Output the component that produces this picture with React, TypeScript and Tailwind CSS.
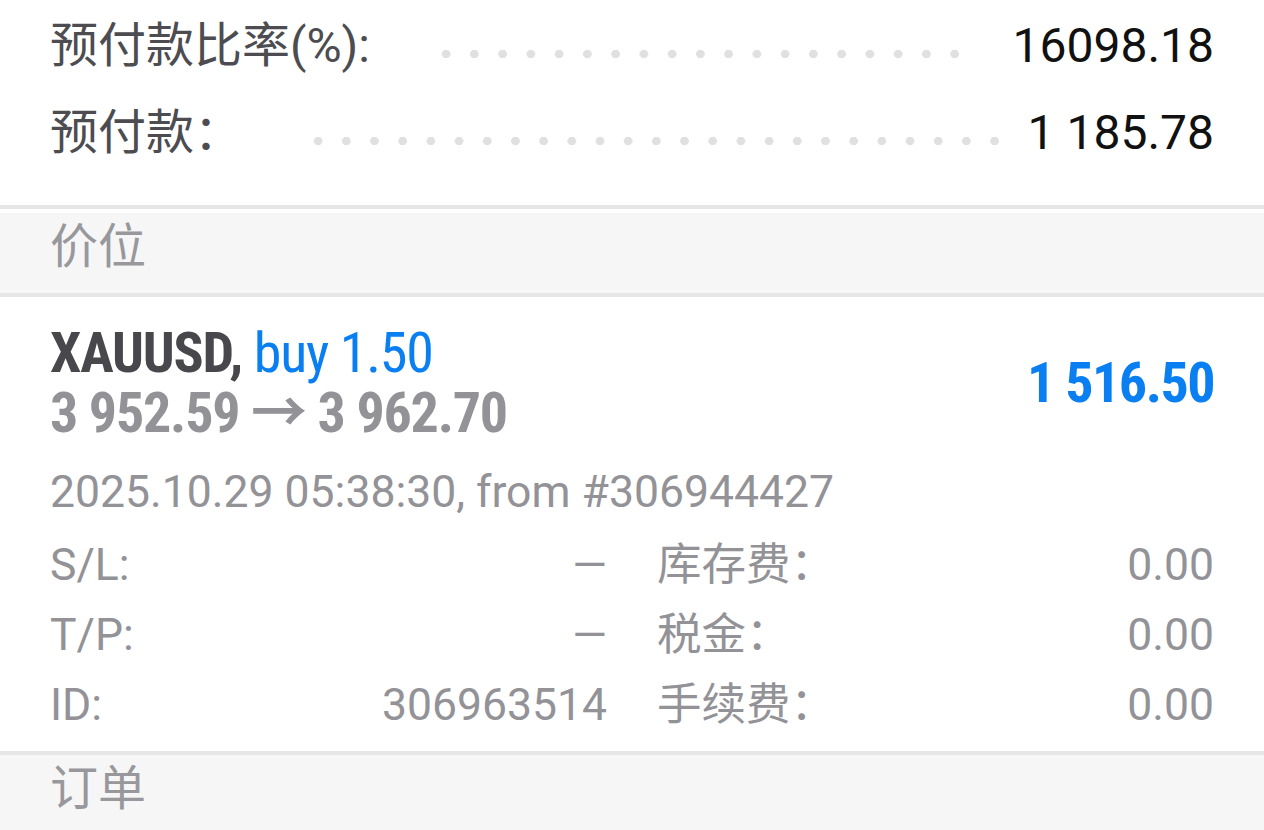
import React from 'react';

const font = "font-['Roboto','Noto_Sans_CJK_SC',sans-serif]";

interface Summary {
  label: string;
  value: string;
  dotsClass: string;
}

const summary: Summary[] = [
  { label: '预付款比率(%):', value: '16098.18', dotsClass: 'ml-[62px] mr-[44px]' },
  { label: '预付款：', value: '1 185.78', dotsClass: 'ml-[62px] mr-[19px]' },
];

const details = [
  { label: 'S/L:', value: '—', label2: '库存费：', value2: '0.00' },
  { label: 'T/P:', value: '—', label2: '税金：', value2: '0.00' },
  { label: 'ID:', value: '306963514', label2: '手续费：', value2: '0.00' },
];

function SectionHeader({ title, gap }: { title: string; gap?: boolean }) {
  return (
    <div className="border-t-4 border-[#e6e6e6]">
      {gap && <div className="h-1 bg-white" />}
      <div className="h-[80px] bg-[#f6f6f6] px-[50px] text-[48px] leading-[68px] text-[#98989c]">{title}</div>
    </div>
  );
}

export default function App() {
  return (
    <div className={`${font} w-[1264px] h-[830px] overflow-hidden bg-white`}>
      <div className="pt-[2px] px-[50px] mb-[29px]">
        {summary.map((row) => (
          <div key={row.label} className="flex h-[87px] items-center text-[48px]">
            <span className="text-[#4c4c51]">{row.label}</span>
            <div
              className={`${row.dotsClass} mt-4 h-2 flex-1 bg-[radial-gradient(circle,#e0e0e0_4px,transparent_4.5px)] bg-[length:28px_8px] bg-repeat-round`}
            />
            <span className="text-[#111111]">{row.value}</span>
          </div>
        ))}
      </div>

      <SectionHeader title="价位" gap />

      <div className="border-t-4 border-[#e6e6e6] px-[50px] pt-[26px]">
        <div className="flex items-center justify-between">
          <div className="text-[56px] leading-[60px] font-stretch-condensed tracking-[-1.2px]">
            <div>
              <span className="font-bold text-[#47474c]">XAUUSD,</span>
              <span className="text-[#0a7ff2]"> buy 1.50</span>
            </div>
            <div className="font-bold text-[#929297]">3 952.59 → 3 962.70</div>
          </div>
          <div className="text-[56px] leading-[60px] font-bold font-stretch-condensed tracking-[-1.5px] text-[#0a7ff2]">
            1 516.50
          </div>
        </div>

        <div className="mt-[19px] text-[44.5px] leading-[60px] text-[#929297]">2025.10.29 05:38:30, from #306944427</div>

        <div className="mt-[8px] mb-[11px] grid grid-cols-2 gap-x-[50px] text-[44.5px] text-[#929297]">
          {details.map((d) => (
            <React.Fragment key={d.label}>
              <div className="flex h-[70px] items-center justify-between">
                <span>{d.label}</span>
                <span>{d.value}</span>
              </div>
              <div className="flex h-[70px] items-center justify-between">
                <span>{d.label2}</span>
                <span>{d.value2}</span>
              </div>
            </React.Fragment>
          ))}
        </div>
      </div>

      <SectionHeader title="订单" />
    </div>
  );
}
